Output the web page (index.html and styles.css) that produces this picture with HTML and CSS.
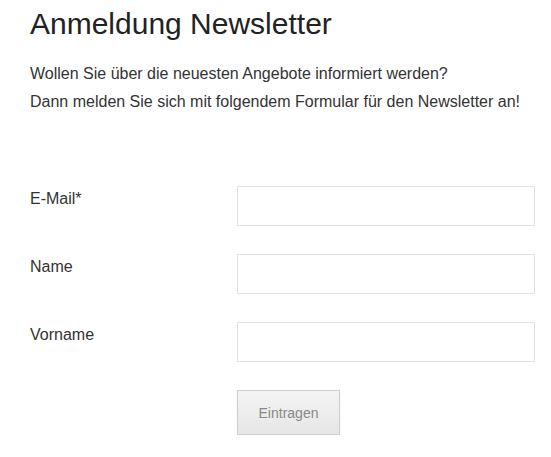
FILE: index.html
```html
<!DOCTYPE html>
<html lang="de">
<head>
<meta charset="utf-8">
<title>Anmeldung Newsletter</title>
<link rel="stylesheet" href="styles.css">
</head>
<body>
<main class="page">
  <h1 class="title">Anmeldung Newsletter</h1>
  <p class="intro">Wollen Sie über die neuesten Angebote informiert werden?<br>Dann melden Sie sich mit folgendem Formular für den Newsletter an!</p>
  <form class="form">
    <label class="label" for="email">E-Mail*</label>
    <input class="field" id="email" type="text">
    <label class="label" for="name">Name</label>
    <input class="field" id="name" type="text">
    <label class="label" for="vorname">Vorname</label>
    <input class="field" id="vorname" type="text">
    <span></span>
    <button class="submit" type="button">Eintragen</button>
  </form>
</main>
</body>
</html>
```
FILE: styles.css
```css
html, body {
  margin: 0;
  padding: 0;
  background: #fff;
}
body {
  font-family: "Liberation Sans", Arial, sans-serif;
  color: #333;
}
.page {
  padding: 7px 16px 0 30px;
}
.title {
  margin: 0;
  font-size: 30px;
  line-height: 34px;
  font-weight: normal;
  color: #222;
}
.intro {
  margin: 19px 0 0;
  font-size: 16px;
  line-height: 28px;
}
.form {
  margin-top: 70px;
  display: grid;
  grid-template-columns: 207px 298px;
  row-gap: 28px;
  align-items: start;
}
.label {
  font-size: 16px;
  line-height: 20px;
  padding-top: 3px;
}
.field {
  box-sizing: border-box;
  height: 40px;
  width: 298px;
  margin: 0;
  border: 1px solid #e3e3e3;
  background: #fff;
  font: 16px "Liberation Sans", Arial, sans-serif;
  padding: 0 10px;
  outline: none;
}
.submit {
  justify-self: start;
  box-sizing: border-box;
  width: 103px;
  height: 45px;
  margin: 0;
  border: 1px solid #cfcfcf;
  background: linear-gradient(#f4f4f4, #e6e6e6);
  box-shadow: 0 1px 2px rgba(0,0,0,0.08);
  color: #888;
  font: 14px "Liberation Sans", Arial, sans-serif;
  padding: 0;
  cursor: pointer;
}
```
